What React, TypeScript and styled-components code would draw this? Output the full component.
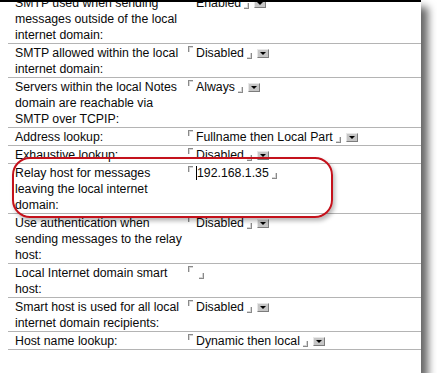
import * as React from 'react';
import styled, {createGlobalStyle} from 'styled-components';

interface Setting {
    label: string[];
    value: string;
    kind: 'select' | 'text';
    highlight?: boolean;
    caret?: boolean;
}

const settings: Setting[] = [
    {label: ['SMTP used when sending', 'messages outside of the local', 'internet domain:'], value: 'Enabled', kind: 'select'},
    {label: ['SMTP allowed within the local', 'internet domain:'], value: 'Disabled', kind: 'select'},
    {label: ['Servers within the local Notes', 'domain are reachable via', 'SMTP over TCPIP:'], value: 'Always', kind: 'select'},
    {label: ['Address lookup:'], value: 'Fullname then Local Part', kind: 'select'},
    {label: ['Exhaustive lookup:'], value: 'Disabled', kind: 'select'},
    {label: ['Relay host for messages', 'leaving the local internet', 'domain:'], value: '192.168.1.35', kind: 'text', highlight: true, caret: true},
    {label: ['Use authentication when', 'sending messages to the relay', 'host:'], value: 'Disabled', kind: 'select'},
    {label: ['Local Internet domain smart', 'host:'], value: '', kind: 'text'},
    {label: ['Smart host is used for all local', 'internet domain recipients:'], value: 'Disabled', kind: 'select'},
    {label: ['Host name lookup:'], value: 'Dynamic then local', kind: 'select'},
];

const GlobalStyle = createGlobalStyle`
    html, body {
        margin: 0;
        padding: 0;
        background: #ffffff;
    }
    body {
        font-family: "Liberation Sans", Arial, sans-serif;
        font-size: 12.3px;
        color: #0a0a0a;
    }
`;

const Panel = styled.div`
    width: 421px;
    height: 371px;
    background: #ffffff;
    border-top: 2px solid #000;
    overflow: hidden;
    box-shadow: 7px 7px 8px rgba(0, 0, 0, 0.6);
`;

const Sheet = styled.div`
    margin-top: -8px;
    display: flex;
    flex-direction: column;
`;

const Row = styled.div`
    position: relative;
    margin-left: 8px;
    display: grid;
    grid-template-columns: 180px 1fr;
    padding-top: 1px;
    border-bottom: 1px solid #b4b4b4;
    line-height: 16px;
`;

const Label = styled.div`
    padding-left: 7px;
    white-space: nowrap;
`;

const Field = styled.div`
    display: flex;
    align-items: flex-start;
    height: 16px;
    white-space: nowrap;
`;

const OpenMark = styled.span`
    width: 4px;
    height: 5px;
    margin-top: 1px;
    margin-right: 3px;
    border-top: 1px solid #8a8a8a;
    border-left: 1px solid #8a8a8a;
    box-shadow: inset 1px 1px 0 #d6d6d6;
`;

const CloseMark = styled.span`
    width: 4px;
    height: 5px;
    margin-top: 8px;
    margin-left: 3px;
    border-bottom: 1px solid #8a8a8a;
    border-right: 1px solid #8a8a8a;
    box-shadow: inset -1px -1px 0 #d6d6d6;
`;

const Caret = styled.span`
    width: 1px;
    height: 14px;
    margin-top: 1px;
    background: #000;
`;

const Drop = styled.span`
    position: relative;
    width: 12px;
    height: 9px;
    margin-top: 4px;
    margin-left: 5px;
    background: #c6c6c6;
    border-top: 1px solid #e8e8e8;
    border-left: 1px solid #e8e8e8;
    border-bottom: 1px solid #7c7c7c;
    border-right: 1px solid #7c7c7c;
    box-sizing: border-box;
    &::after {
        content: '';
        position: absolute;
        left: 2px;
        top: 2px;
        border-left: 3px solid transparent;
        border-right: 3px solid transparent;
        border-top: 3px solid #000;
    }
`;

const Highlight = styled.div`
    position: absolute;
    left: 4px;
    top: -7px;
    width: 321px;
    height: 61px;
    box-sizing: border-box;
    border: 2px solid #c4121c;
    border-radius: 18px;
    box-shadow: 2px 3px 4px rgba(0, 0, 0, 0.28);
    pointer-events: none;
    z-index: 2;
`;

export default function App() {
    return (
        <>
            <GlobalStyle/>
            <Panel>
                <Sheet>
                    {settings.map((s, i) => (
                        <Row key={i}>
                            <Label>
                                {s.label.map((line, j) => <div key={j}>{line}</div>)}
                            </Label>
                            <Field>
                                <OpenMark/>
                                {s.caret && <Caret/>}
                                {s.value && <span>{s.value}</span>}
                                <CloseMark/>
                                {s.kind === 'select' && <Drop/>}
                            </Field>
                            {s.highlight && <Highlight/>}
                        </Row>
                    ))}
                </Sheet>
            </Panel>
        </>
    );
}
